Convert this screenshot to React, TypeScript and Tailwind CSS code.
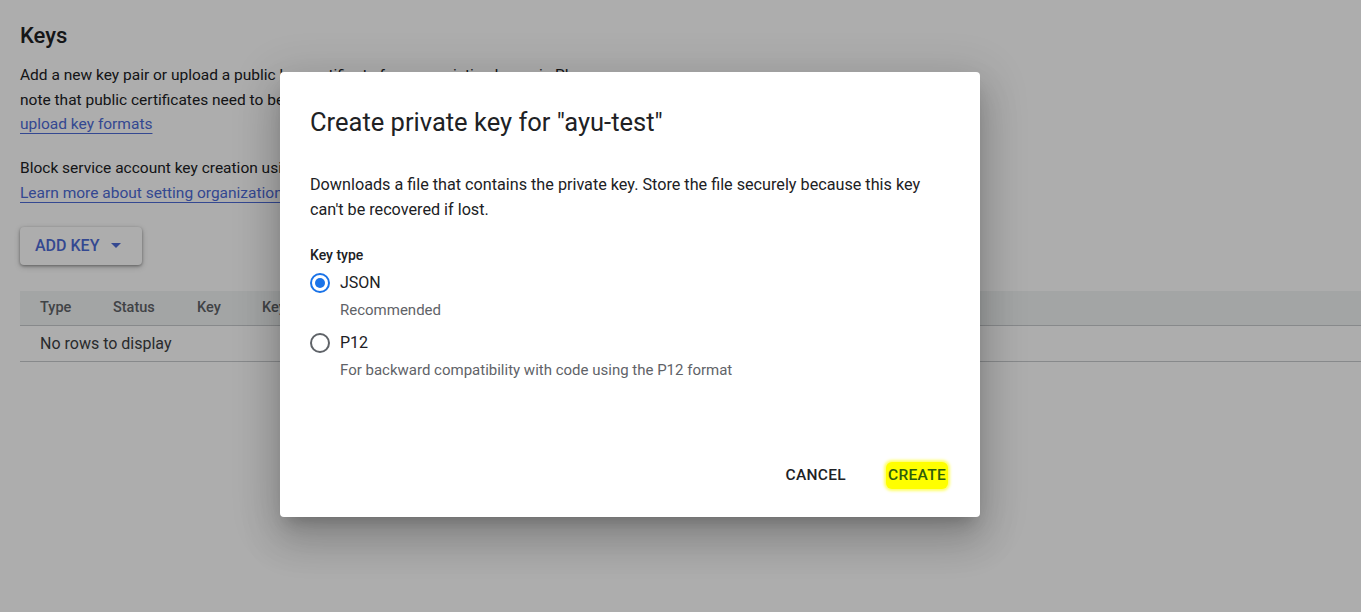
import { useState } from "react";

const columns = ["Type", "Status", "Key", "Key creation date", "Key expiration date"];

function Radio({ checked }: { checked: boolean }) {
	return (
		<span
			className={`flex h-5 w-5 shrink-0 items-center justify-center rounded-full border-2 ${
				checked ? "border-[#1a73e8]" : "border-[#5f6368]"
			}`}
		>
			{checked && <span className="h-2.5 w-2.5 rounded-full bg-[#1a73e8]" />}
		</span>
	);
}

function KeysPage() {
	return (
		<div className="flex flex-col pl-5 pt-[21px] text-[#202124]">
			<h2 className="text-[22px] font-medium leading-[30px]">Keys</h2>
			<p className="mt-[12px] text-[15.5px] leading-[24.5px]">
				Add a new key pair or upload a public key certificate from an existing key pair. Please
				<br />
				note that public certificates need to be in RSA_X509_PEM format. Learn more about
				<br />
				<a className="text-[#4d6bd6] underline underline-offset-4">upload key formats</a>
			</p>
			<p className="mt-[19px] text-[15.5px] leading-[25px]">
				Block service account key creation using organization policies.
				<br />
				<a className="text-[#4d6bd6] underline underline-offset-4">
					Learn more about setting organization policies for service accounts
				</a>
			</p>
			<div className="mt-[21px]">
				<button className="flex h-[38px] items-center gap-3 rounded bg-white pl-[15px] pr-[21px] text-[16px] font-medium text-[#4d6bd6] shadow-[0_1px_3px_rgba(0,0,0,0.35),0_2px_6px_rgba(0,0,0,0.2)]">
					ADD KEY
					<svg width="10" height="5" viewBox="0 0 10 5">
						<path d="M0 0 L10 0 L5 5 Z" fill="currentColor" />
					</svg>
				</button>
			</div>
			<div className="mt-[26px]">
				<div className="flex h-[35px] items-center border-b border-[#c8cacd] bg-[#f1f3f4] pl-5 text-[14.5px] font-medium text-[#5f6368]">
					{columns.map((c, i) => (
						<span key={c} className={i === 0 ? "w-[73px]" : i === 1 ? "w-[84px]" : i === 2 ? "w-[65px]" : "w-[180px]"}>
							{c}
						</span>
					))}
				</div>
				<div className="flex h-[36px] items-center border-b border-[#c8cacd] pl-5 pt-[2px] text-[16px] text-[#3c4043]">
					No rows to display
				</div>
			</div>
		</div>
	);
}

function CreateKeyDialog() {
	const [keyType, setKeyType] = useState("JSON");

	return (
		<div className="absolute left-[280px] top-[72px] flex h-[445px] w-[700px] flex-col rounded bg-white px-[30px] shadow-[0_11px_15px_-7px_rgba(0,0,0,0.2),0_24px_38px_3px_rgba(0,0,0,0.14),0_9px_46px_8px_rgba(0,0,0,0.12)]">
			<h1 className="mt-[34px] text-[25.5px] leading-[32px] text-[#202124]">Create private key for "ayu-test"</h1>
			<p className="mt-[34px] text-[16.2px] leading-[25px] text-[#202124]">
				Downloads a file that contains the private key. Store the file securely because this key
				<br />
				can't be recovered if lost.
			</p>
			<div className="mt-[24px] text-[14px] font-medium leading-[18px] text-[#202124]">Key type</div>
			<div className="mt-[7px] flex flex-col">
				{[
					{ id: "JSON", hint: "Recommended" },
					{ id: "P12", hint: "For backward compatibility with code using the P12 format" },
				].map((o) => (
					<label key={o.id} className="flex cursor-pointer flex-col" onClick={() => setKeyType(o.id)}>
						<span className="flex h-[24px] items-center gap-[10px]">
							<Radio checked={keyType === o.id} />
							<span className="text-[16px] text-[#202124]">{o.id}</span>
						</span>
						<span className="ml-[30px] h-[36px] pt-[5px] text-[15px] leading-[20px] text-[#5f6368]">{o.hint}</span>
					</label>
				))}
			</div>
			<div className="mt-auto mb-[28px] flex items-center justify-end gap-[40px] pr-[2px]">
				<button className="text-[15.5px] font-medium tracking-[0.3px] text-[#202124]">CANCEL</button>
				<button className="rounded-[6px] bg-[#ffff00] px-[2px] py-[2px] text-[15.5px] font-medium tracking-[0.3px] text-[#2f5d0c] shadow-[0_0_3px_2px_rgba(255,255,0,0.6)]">
					CREATE
				</button>
			</div>
		</div>
	);
}

export default function App() {
	return (
		<div className="relative h-[612px] w-full overflow-hidden bg-white font-['Roboto','Liberation_Sans',sans-serif]">
			<KeysPage />
			<div className="absolute inset-0 bg-black/[0.32]" />
			<CreateKeyDialog />
		</div>
	);
}
